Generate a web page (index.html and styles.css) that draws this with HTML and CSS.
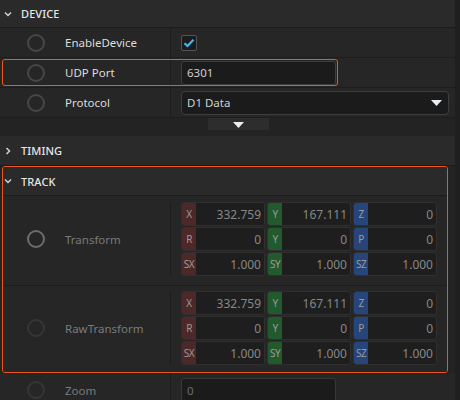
FILE: index.html
```html
<!DOCTYPE html>
<html>
<head>
<meta charset="utf-8">
<link rel="stylesheet" href="styles.css">
</head>
<body>
<div class="panel">
  <div class="header">
    <svg class="chev" width="8" height="8" viewBox="0 0 8 8"><path d="M1 2.5 L4 5.5 L7 2.5" fill="none" stroke="#c8d4e0" stroke-width="1.5"/></svg>
    <span>DEVICE</span>
  </div>
  <div class="row">
    <div class="key"><span class="dot"></span><span class="label">EnableDevice</span></div>
    <div class="val"><span class="checkbox"><svg width="12" height="10" viewBox="0 0 12 10"><path d="M1.5 5.2 L4.5 8 L10.5 1.8" fill="none" stroke="#45b4f2" stroke-width="2.2"/></svg></span></div>
  </div>
  <div class="row focused">
    <div class="key"><span class="dot"></span><span class="label">UDP Port</span></div>
    <div class="val"><span class="field short">6301</span></div>
  </div>
  <div class="row">
    <div class="key"><span class="dot"></span><span class="label">Protocol</span></div>
    <div class="val"><span class="field select"><span>D1 Data</span><svg width="11" height="6" viewBox="0 0 11 6"><path d="M0 0 H11 L5.5 6 Z" fill="#e8eef4"/></svg></span></div>
  </div>
  <div class="expander"><div class="tab"><svg width="11" height="6" viewBox="0 0 11 6"><path d="M0 0 H11 L5.5 6 Z" fill="#e8eef4"/></svg></div></div>
  <div class="header timing">
    <svg class="chev" width="8" height="8" viewBox="0 0 8 8"><path d="M2.5 1 L5.5 4 L2.5 7" fill="none" stroke="#c8d4e0" stroke-width="1.5"/></svg>
    <span>TIMING</span>
  </div>
  <div class="track">
    <div class="header inner">
      <svg class="chev" width="8" height="8" viewBox="0 0 8 8"><path d="M1 2.5 L4 5.5 L7 2.5" fill="none" stroke="#c8d4e0" stroke-width="1.5"/></svg>
      <span>TRACK</span>
    </div>
    <div class="row vec first">
      <div class="key"><span class="dot mid"></span><span class="label dim">Transform</span></div>
      <div class="val">
        <div class="grid">
          <div class="cell"><span class="tag r">X</span><span class="num">332.759</span></div>
          <div class="cell"><span class="tag g">Y</span><span class="num">167.111</span></div>
          <div class="cell"><span class="tag b">Z</span><span class="num">0</span></div>
          <div class="cell"><span class="tag r">R</span><span class="num">0</span></div>
          <div class="cell"><span class="tag g">Y</span><span class="num">0</span></div>
          <div class="cell"><span class="tag b">P</span><span class="num">0</span></div>
          <div class="cell"><span class="tag r">SX</span><span class="num">1.000</span></div>
          <div class="cell"><span class="tag g">SY</span><span class="num">1.000</span></div>
          <div class="cell"><span class="tag b">SZ</span><span class="num">1.000</span></div>
        </div>
      </div>
    </div>
    <div class="row vec second">
      <div class="key"><span class="dot faint"></span><span class="label dim">RawTransform</span></div>
      <div class="val">
        <div class="grid">
          <div class="cell"><span class="tag r">X</span><span class="num">332.759</span></div>
          <div class="cell"><span class="tag g">Y</span><span class="num">167.111</span></div>
          <div class="cell"><span class="tag b">Z</span><span class="num">0</span></div>
          <div class="cell"><span class="tag r">R</span><span class="num">0</span></div>
          <div class="cell"><span class="tag g">Y</span><span class="num">0</span></div>
          <div class="cell"><span class="tag b">P</span><span class="num">0</span></div>
          <div class="cell"><span class="tag r">SX</span><span class="num">1.000</span></div>
          <div class="cell"><span class="tag g">SY</span><span class="num">1.000</span></div>
          <div class="cell"><span class="tag b">SZ</span><span class="num">1.000</span></div>
        </div>
      </div>
    </div>
  </div>
  <div class="row zoom">
    <div class="key"><span class="dot faint"></span><span class="label dim">Zoom</span></div>
    <div class="val"><span class="field short dimtext">0</span></div>
  </div>
</div>
</body>
</html>
```

FILE: styles.css
```css
* { box-sizing: border-box; }
html, body { margin: 0; padding: 0; }
body {
  background: #1f1f1f;
  width: 460px;
  height: 400px;
  overflow: hidden;
  font-family: "Noto Sans", "Open Sans", sans-serif;
  font-size: 11.5px;
  color: #dcdcdc;
}
.panel {
  width: 455px;
  height: 400px;
  background: #232323;
}
.header {
  height: 28px;
  background: #2a2a2a;
  border-bottom: 1px solid #1c1c1c;
  display: flex;
  align-items: center;
  padding-left: 4px;
  font-size: 11px;
  font-weight: 500;
  color: #e6e6e6;
  letter-spacing: 0.1px;
}
.header .chev { margin-right: 9px; }
.header.timing { height: 30px; }
.header.inner { padding-left: 1px; height: 29px; }
.row {
  position: relative;
  display: flex;
  height: 30px;
  background: #262626;
  border-bottom: 1px solid #1d1d1d;
}
.key {
  width: 170px;
  flex: none;
  display: flex;
  align-items: center;
  padding-left: 27px;
}
.val {
  flex: 1;
  border-left: 1px solid #1d1d1d;
  padding-left: 10px;
  padding-right: 6px;
  display: flex;
  align-items: center;
}
.dot {
  width: 18px;
  height: 18px;
  border-radius: 50%;
  border: 2px solid #474747;
  flex: none;
}
.dot.mid { border-color: #6c6c6c; }
.dot.faint { border-color: #363636; }
.label { margin-left: 20px; }
.label.dim { color: #7a7a7a; }
.checkbox {
  width: 16px;
  height: 16px;
  border: 1px solid #545454;
  border-radius: 2px;
  background: #1c1c1c;
  display: flex;
  align-items: center;
  justify-content: center;
}
.field {
  height: 24px;
  background: #1b1b1b;
  border: 1px solid #3e3e3e;
  border-radius: 3px;
  display: flex;
  align-items: center;
  padding-left: 5px;
  color: #cfcfcf;
}
.field.short { width: 155px; }
.field.select {
  flex: 1;
  border-radius: 4px;
  justify-content: space-between;
  padding-right: 6px;
}
.field.dimtext { color: #6e6e6e; border-color: #383838; }
.focused::after {
  content: "";
  position: absolute;
  left: 2px;
  top: 1px;
  width: 334px;
  height: 25px;
  border: 1px solid #ec561c;
  border-radius: 3px;
}
.expander {
  height: 18px;
  background: #232323;
  padding-left: 208px;
}
.tab {
  width: 61px;
  height: 12px;
  background: #2d2d2d;
  display: flex;
  justify-content: center;
  padding-top: 4px;
}
.track {
  margin-left: 2px;
  width: 446px;
  border: 1px solid #ec561c;
  border-radius: 3px;
  overflow: hidden;
}
.track .key { width: 167px; padding-left: 24px; }
.track .row.vec { height: auto; align-items: stretch; }
.track .row.first { padding: 6px 0 9px; }
.track .row.second { padding: 5px 0 7px; border-bottom: none; }
.track .val { padding-right: 0; }
.grid {
  display: grid;
  grid-template-columns: repeat(3, 84px);
  grid-auto-rows: 24px;
  column-gap: 2px;
  row-gap: 1px;
}
.cell {
  display: flex;
  align-items: stretch;
  background: #1e1e1e;
  border: 1px solid #303030;
  border-radius: 3px;
  overflow: hidden;
}
.tag {
  width: 14px;
  flex: none;
  display: flex;
  align-items: center;
  justify-content: center;
  font-size: 10px;
  color: #9a9a9a;
  letter-spacing: -0.5px;
}
.tag.r { background: #4d2828; }
.tag.g { background: #225a2d; }
.tag.b { background: #26457b; }
.num {
  flex: 1;
  display: flex;
  align-items: center;
  justify-content: flex-end;
  padding-right: 3px;
  font-size: 12px;
  color: #878787;
}
.row.zoom { border-bottom: none; height: 34px; }
```
